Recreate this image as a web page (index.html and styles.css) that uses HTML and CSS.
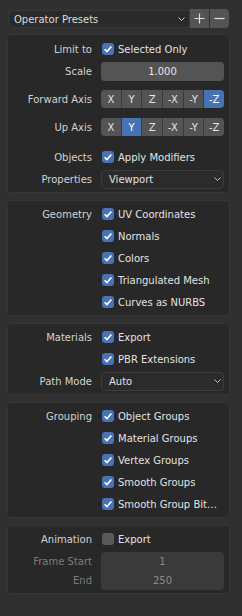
FILE: index.html
```html
<!DOCTYPE html>
<html lang="en">
<head>
    <meta charset="UTF-8">
    <meta name="viewport" content="width=device-width, initial-scale=1.0">
    <title>Export Options</title>
    <link rel="stylesheet" href="styles.css">
</head>
<body>
<div class="sidebar">
    <div class="presets">
        <div class="preset-menu">
            <span>Operator Presets</span>
            <svg class="chevron" width="7" height="4" viewBox="0 0 7 4"><path d="M0.5 0.5 L3.5 3.5 L6.5 0.5" fill="none" stroke="#c4c4c4" stroke-width="1"/></svg>
        </div>
        <button class="preset-btn">
            <svg width="11" height="11" viewBox="0 0 11 11"><path d="M5.5 0.5 V10.5 M0.5 5.5 H10.5" stroke="#e0e0e0" stroke-width="1.2"/></svg>
        </button>
        <button class="preset-btn last">
            <svg width="11" height="11" viewBox="0 0 11 11"><path d="M0.5 5.5 H10.5" stroke="#e0e0e0" stroke-width="1.2"/></svg>
        </button>
    </div>

    <section class="panel first">
        <div class="row">
            <span class="label">Limit to</span>
            <label class="toggle"><span class="check on"></span>Selected Only</label>
        </div>
        <div class="row">
            <span class="label">Scale</span>
            <div class="number">1.000</div>
        </div>
        <div class="row sep">
            <span class="label">Forward Axis</span>
            <div class="axis">
                <span>X</span><span>Y</span><span>Z</span><span>-X</span><span>-Y</span><span class="active">-Z</span>
            </div>
        </div>
        <div class="row sep">
            <span class="label">Up Axis</span>
            <div class="axis">
                <span>X</span><span class="active">Y</span><span>Z</span><span>-X</span><span>-Y</span><span>-Z</span>
            </div>
        </div>
        <div class="row sep-lg">
            <span class="label">Objects</span>
            <label class="toggle"><span class="check on"></span>Apply Modifiers</label>
        </div>
        <div class="row">
            <span class="label">Properties</span>
            <div class="dropdown">
                <span>Viewport</span>
                <svg class="chevron" width="7" height="4" viewBox="0 0 7 4"><path d="M0.5 0.5 L3.5 3.5 L6.5 0.5" fill="none" stroke="#c4c4c4" stroke-width="1"/></svg>
            </div>
        </div>
    </section>

    <section class="panel">
        <div class="row">
            <span class="label">Geometry</span>
            <label class="toggle"><span class="check on"></span>UV Coordinates</label>
        </div>
        <div class="row">
            <span class="label"></span>
            <label class="toggle"><span class="check on"></span>Normals</label>
        </div>
        <div class="row">
            <span class="label"></span>
            <label class="toggle"><span class="check on"></span>Colors</label>
        </div>
        <div class="row">
            <span class="label"></span>
            <label class="toggle"><span class="check on"></span>Triangulated Mesh</label>
        </div>
        <div class="row">
            <span class="label"></span>
            <label class="toggle"><span class="check on"></span>Curves as NURBS</label>
        </div>
    </section>

    <section class="panel">
        <div class="row">
            <span class="label">Materials</span>
            <label class="toggle"><span class="check on"></span>Export</label>
        </div>
        <div class="row">
            <span class="label"></span>
            <label class="toggle"><span class="check on"></span>PBR Extensions</label>
        </div>
        <div class="row">
            <span class="label">Path Mode</span>
            <div class="dropdown">
                <span>Auto</span>
                <svg class="chevron" width="7" height="4" viewBox="0 0 7 4"><path d="M0.5 0.5 L3.5 3.5 L6.5 0.5" fill="none" stroke="#c4c4c4" stroke-width="1"/></svg>
            </div>
        </div>
    </section>

    <section class="panel">
        <div class="row">
            <span class="label">Grouping</span>
            <label class="toggle"><span class="check on"></span>Object Groups</label>
        </div>
        <div class="row">
            <span class="label"></span>
            <label class="toggle"><span class="check on"></span>Material Groups</label>
        </div>
        <div class="row">
            <span class="label"></span>
            <label class="toggle"><span class="check on"></span>Vertex Groups</label>
        </div>
        <div class="row">
            <span class="label"></span>
            <label class="toggle"><span class="check on"></span>Smooth Groups</label>
        </div>
        <div class="row">
            <span class="label"></span>
            <label class="toggle"><span class="check on"></span>Smooth Group Bit…</label>
        </div>
    </section>

    <section class="panel">
        <div class="row">
            <span class="label">Animation</span>
            <label class="toggle"><span class="check"></span>Export</label>
        </div>
        <div class="row stack">
            <div class="labels">
                <span class="label disabled">Frame Start</span>
                <span class="label disabled">End</span>
            </div>
            <div class="fields">
                <div class="number disabled">1</div>
                <div class="number disabled">250</div>
            </div>
        </div>
    </section>
</div>
</body>
</html>
```

FILE: styles.css
```css
body {
    margin: 0;
    background-color: #303030;
    font-family: "DejaVu Sans", sans-serif;
    font-size: 10px;
    color: #d6d6d6;
}

.sidebar {
    width: 223px;
    padding: 10px 0 0 7px;
}

/* preset bar */
.presets {
    display: flex;
    height: 18px;
    margin: 0 1px 6px 1px;
}
.preset-menu {
    flex: 1;
    display: flex;
    align-items: center;
    justify-content: space-between;
    padding: 0 4px 0 5px;
    background-color: #2a2a2a;
    border: 1px solid #383838;
    border-radius: 4px 0 0 4px;
    color: #dcdcdc;
}
.preset-btn {
    width: 19px;
    height: 19px;
    margin-top: -1px;
    padding: 0;
    display: flex;
    align-items: center;
    justify-content: center;
    background-color: #545454;
    border: none;
}
.preset-btn.last {
    margin-left: 1px;
    border-radius: 0 4px 4px 0;
}

/* panels */
.panel {
    box-sizing: border-box;
    width: 223px;
    display: flex;
    flex-direction: column;
    gap: 2px;
    padding: 3px 5px 3px 0;
    margin-bottom: 7px;
    background-color: #282828;
    border: 1px solid #363636;
    border-radius: 4px;
}
.panel.first {
    padding-top: 4px;
}

.row {
    display: grid;
    grid-template-columns: 84px 123px;
    column-gap: 9px;
    align-items: center;
    height: 20px;
}
.row.sep {
    margin-top: 6px;
}
.row.sep-lg {
    margin-top: 8px;
}
.label {
    text-align: right;
    white-space: nowrap;
    color: #d2d2d2;
}
.label.disabled {
    color: #7c7c7c;
}

/* checkbox */
.toggle {
    display: flex;
    align-items: center;
    gap: 4px;
    color: #e2e2e2;
    white-space: nowrap;
}
.check {
    width: 12px;
    height: 12px;
    margin-left: 1px;
    border-radius: 3px;
    background-color: #595959;
}
.check.on {
    background: #4772b3 url("data:image/svg+xml,%3Csvg xmlns='http://www.w3.org/2000/svg' width='12' height='12' viewBox='0 0 12 12'%3E%3Cpath d='M2.6 6.3 L4.9 8.6 L9.4 3.4' fill='none' stroke='white' stroke-width='1.6'/%3E%3C/svg%3E") no-repeat center;
}

/* number fields */
.number {
    height: 19px;
    display: flex;
    align-items: center;
    justify-content: center;
    background-color: #545454;
    border-radius: 4px;
    color: #e6e6e6;
}

/* axis buttons */
.axis {
    display: grid;
    grid-template-columns: repeat(6, 1fr);
    gap: 1px;
    height: 18px;
    border-radius: 4px;
    overflow: hidden;
    background-color: #3a3a3a;
}
.axis span {
    display: flex;
    align-items: center;
    justify-content: center;
    background-color: #545454;
    color: #e6e6e6;
}
.axis span.active {
    background-color: #4772b3;
    color: #ffffff;
}

/* dropdown */
.dropdown {
    box-sizing: border-box;
    height: 19px;
    display: flex;
    align-items: center;
    justify-content: space-between;
    padding: 0 2px 0 7px;
    background-color: #2b2b2b;
    border: 1px solid #3c3c3c;
    border-radius: 4px;
    color: #e0e0e0;
}

/* frame range */
.row.stack {
    height: 38px;
    margin-top: 1px;
}
.labels {
    display: flex;
    flex-direction: column;
}
.labels .label {
    line-height: 19px;
}
.fields {
    display: flex;
    flex-direction: column;
    border-radius: 4px;
    overflow: hidden;
}
.number.disabled {
    border-radius: 0;
    background-color: #3a3a3a;
    color: #8a8a8a;
}
```
